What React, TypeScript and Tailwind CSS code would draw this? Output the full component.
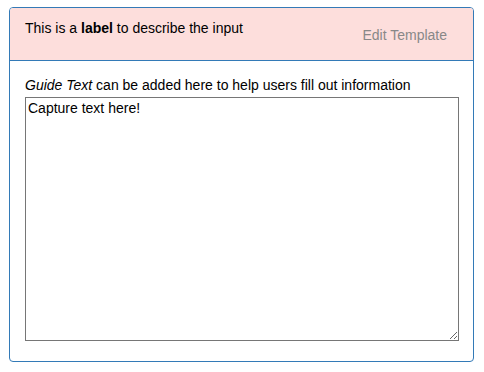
import React from 'react';

export default function App() {
  return (
    <main className="min-h-screen bg-white pt-[7px] pl-[9px] font-['Liberation_Sans',Arial,sans-serif] text-[14px] text-black">
      <div className="w-[465px] h-[355px] border border-[#337ab7] rounded-[4px] overflow-hidden flex flex-col">
        {/* Header */}
        <div className="h-[53px] shrink-0 bg-[#fddedc] border-b border-[#337ab7] flex justify-between pl-[15px] pr-[26px]">
          <div className="pt-[12px] leading-[16px]">
            This is a <b>label</b> to describe the input
          </div>
          <button className="self-center mt-[1px] text-[#888] leading-[16px] cursor-pointer">
            Edit Template
          </button>
        </div>

        {/* Body */}
        <div className="flex-1 pl-[15px] pr-[14px] pt-[16px] pb-[20px] flex flex-col">
          <label className="leading-[16px] mb-[4px]">
            <i>Guide Text</i> can be added here to help users fill out information
          </label>
          <textarea
            defaultValue="Capture text here!"
            className="w-[434px] h-[244px] border border-[#767676] px-[2px] py-[2px] leading-[16px] outline-none"
          />
        </div>
      </div>
    </main>
  );
}
